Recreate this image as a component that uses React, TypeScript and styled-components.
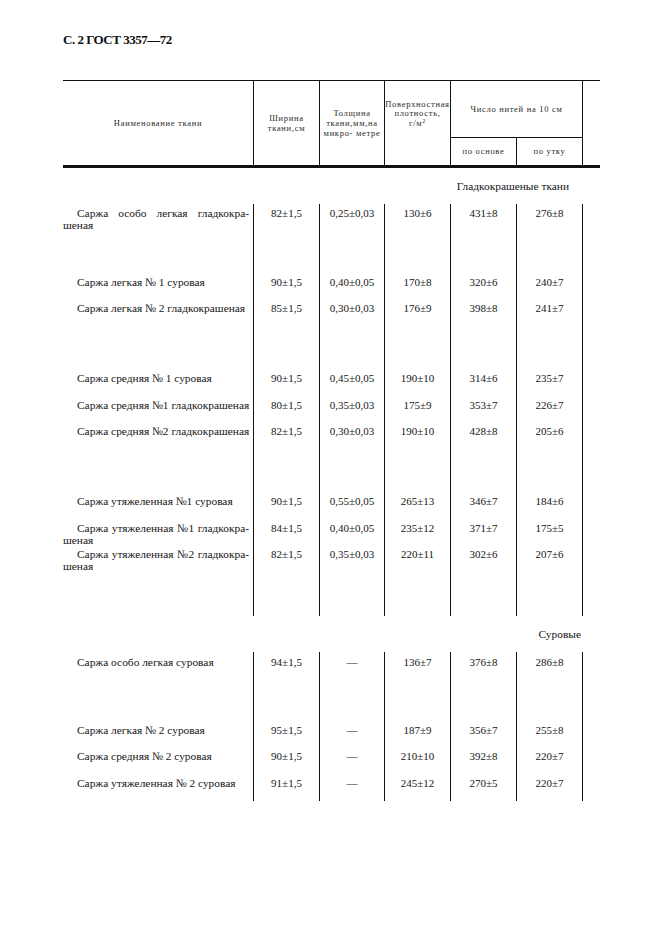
import React from 'react';
import styled, {createGlobalStyle} from 'styled-components';

const GlobalStyle = createGlobalStyle`
  html, body {
    margin: 0;
    padding: 0;
    background: #fff;
  }
  body {
    font-family: "Liberation Serif", "Times New Roman", serif;
    color: #161616;
  }
`;

const SERIF = '"Liberation Serif", "Times New Roman", serif';
const COLUMNS = '190px 66px 65px 66px 66px 66px 18px';

const Page = styled.div`
  width: 661px;
  height: 936px;
  box-sizing: border-box;
  padding: 32px 0 0 63px;
  overflow: hidden;
  font-family: ${SERIF};
`;

const Title = styled.h1`
  margin: 0;
  font-family: ${SERIF};
  font-size: 13px;
  line-height: 16px;
  font-weight: bold;
  letter-spacing: -0.5px;
  color: #111;
`;

const Table = styled.div`
  width: 537px;
  margin-top: 32px;
`;

const Head = styled.div`
  display: grid;
  grid-template-columns: ${COLUMNS};
  grid-template-rows: 55.5px 28px;
  border-top: 1px solid #111;
  border-bottom: 3px solid #111;
`;

const HeadCell = styled.div<{
  $col: string;
  $row: string;
  $left?: boolean;
  $top?: boolean;
  $pt?: number;
  $lh?: number;
}>`
  grid-column: ${(p) => p.$col};
  grid-row: ${(p) => p.$row};
  box-sizing: border-box;
  border-left: ${(p) => (p.$left ? '1px solid #111' : 'none')};
  border-top: ${(p) => (p.$top ? '1px solid #111' : 'none')};
  display: flex;
  flex-direction: column;
  align-items: center;
  justify-content: ${(p) => (p.$pt !== undefined ? 'flex-start' : 'center')};
  padding-top: ${(p) => p.$pt ?? 0}px;
  font-family: ${SERIF};
  font-size: 8.5px;
  line-height: ${(p) => p.$lh ?? 10}px;
  letter-spacing: 0.7px;
  color: #2a2a2a;
  text-align: center;
  white-space: nowrap;

  sup {
    font-size: 6px;
    line-height: 0;
    vertical-align: 3px;
  }
`;

const Caption = styled.div<{$h: number; $pr: number}>`
  height: ${(p) => p.$h}px;
  line-height: ${(p) => p.$h}px;
  padding-right: ${(p) => p.$pr}px;
  text-align: right;
  font-family: ${SERIF};
  font-size: 11.4px;
`;

const Row = styled.div<{$h: number}>`
  display: grid;
  grid-template-columns: ${COLUMNS};
  height: ${(p) => p.$h}px;
`;

const Cell = styled.div<{$left?: boolean}>`
  box-sizing: border-box;
  border-left: ${(p) => (p.$left ? '1px solid #111' : 'none')};
  font-family: ${SERIF};
  font-size: 11px;
  line-height: 12px;
  text-align: center;
  white-space: nowrap;
`;

const NameCell = styled.div`
  box-sizing: border-box;
  padding-right: 4px;
  font-family: ${SERIF};
  font-size: 11.4px;
  line-height: 12px;
`;

const NameLine = styled.div<{$justify?: boolean}>`
  text-indent: ${(p) => (p.$justify ? 14 : 0)}px;
  text-align: ${(p) => (p.$justify ? 'justify' : 'left')};
  text-align-last: ${(p) => (p.$justify ? 'justify' : 'left')};
  white-space: nowrap;
`;

const FirstLine = styled.div`
  padding-left: 14px;
  white-space: nowrap;
`;

type Line =
  | {kind: 'gap'; h: number}
  | {kind: 'row'; name: string | [string, string]; values: string[]; h?: number};

const ROW_H = 26.4;

const dyed: Line[] = [
  {kind: 'gap', h: 2.7},
  {kind: 'row', name: ['Саржа особо легкая гладкокра-', 'шеная'], values: ['82±1,5', '0,25±0,03', '130±6', '431±8', '276±8']},
  {kind: 'gap', h: 42.6},
  {kind: 'row', name: 'Саржа легкая № 1 суровая', values: ['90±1,5', '0,40±0,05', '170±8', '320±6', '240±7']},
  {kind: 'row', name: 'Саржа легкая № 2 гладкокрашеная', values: ['85±1,5', '0,30±0,03', '176±9', '398±8', '241±7']},
  {kind: 'gap', h: 43.8},
  {kind: 'row', name: 'Саржа средняя № 1 суровая', values: ['90±1,5', '0,45±0,05', '190±10', '314±6', '235±7']},
  {kind: 'row', name: 'Саржа средняя №1 гладкокрашеная', values: ['80±1,5', '0,35±0,03', '175±9', '353±7', '226±7']},
  {kind: 'row', name: 'Саржа средняя №2 гладкокрашеная', values: ['82±1,5', '0,30±0,03', '190±10', '428±8', '205±6']},
  {kind: 'gap', h: 43.8},
  {kind: 'row', name: 'Саржа утяжеленная №1 суровая', values: ['90±1,5', '0,55±0,05', '265±13', '346±7', '184±6']},
  {kind: 'row', name: ['Саржа утяжеленная №1 гладкокра-', 'шеная'], values: ['84±1,5', '0,40±0,05', '235±12', '371±7', '175±5']},
  {kind: 'row', name: ['Саржа утяжеленная №2 гладкокра-', 'шеная'], values: ['82±1,5', '0,35±0,03', '220±11', '302±6', '207±6']},
  {kind: 'gap', h: 41.2},
];

const raw: Line[] = [
  {kind: 'gap', h: 4},
  {kind: 'row', name: 'Саржа особо легкая суровая', values: ['94±1,5', '—', '136±7', '376±8', '286±8']},
  {kind: 'gap', h: 42},
  {kind: 'row', name: 'Саржа легкая № 2 суровая', values: ['95±1,5', '—', '187±9', '356±7', '255±8']},
  {kind: 'row', name: 'Саржа средняя № 2 суровая', values: ['90±1,5', '—', '210±10', '392±8', '220±7']},
  {kind: 'row', name: 'Саржа утяжеленная № 2 суровая', values: ['91±1,5', '—', '245±12', '270±5', '220±7'], h: 23.8},
];

const BodyLine = ({line}: {line: Line}) => {
  if (line.kind === 'gap') {
    return (
      <Row $h={line.h}>
        <NameCell/>
        {[0, 1, 2, 3, 4, 5].map((i) => <Cell key={i} $left/>)}
      </Row>
    );
  }
  return (
    <Row $h={line.h ?? ROW_H}>
      <NameCell>
        {Array.isArray(line.name) ? (
          <>
            <NameLine $justify>{line.name[0]}</NameLine>
            <NameLine>{line.name[1]}</NameLine>
          </>
        ) : (
          <FirstLine>{line.name}</FirstLine>
        )}
      </NameCell>
      {line.values.map((v, i) => <Cell key={i} $left>{v}</Cell>)}
      <Cell $left/>
    </Row>
  );
};

const App = () => (
  <>
    <GlobalStyle/>
    <Page>
      <Title>С. 2 ГОСТ 3357—72</Title>
      <Table>
        <Head>
          <HeadCell $col="1" $row="1 / 3">Наименование ткани</HeadCell>
          <HeadCell $col="2" $row="1 / 3" $left>
            <span>Ширина</span>
            <span>ткани,см</span>
          </HeadCell>
          <HeadCell $col="3" $row="1 / 3" $left>
            <span>Толщина</span>
            <span>ткани,мм,на</span>
            <span>микро- метре</span>
          </HeadCell>
          <HeadCell $col="4" $row="1 / 3" $left $pt={19} $lh={9.4}>
            <span>Поверхностная</span>
            <span>плотность,</span>
            <span>г/м<sup>2</sup></span>
          </HeadCell>
          <HeadCell $col="5 / 7" $row="1" $left>Число нитей на 10 см</HeadCell>
          <HeadCell $col="5" $row="2" $left $top>по основе</HeadCell>
          <HeadCell $col="6" $row="2" $left $top>по утку</HeadCell>
          <HeadCell $col="7" $row="1 / 3" $left/>
        </Head>

        <Caption $h={36.5} $pr={31}>Гладкокрашеные ткани</Caption>
        {dyed.map((line, i) => <BodyLine key={i} line={line}/>)}

        <Caption $h={36} $pr={19}>Суровые</Caption>
        {raw.map((line, i) => <BodyLine key={i} line={line}/>)}
      </Table>
    </Page>
  </>
);

export default App;
